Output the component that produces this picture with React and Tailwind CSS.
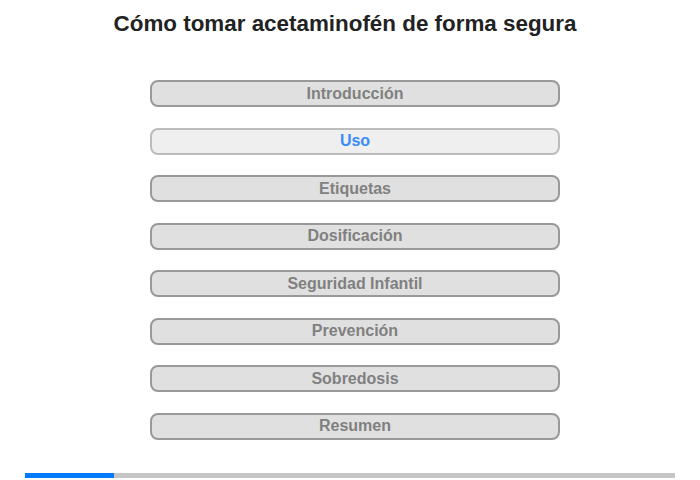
import React from "react";

const sections = [
  "Introducción",
  "Uso",
  "Etiquetas",
  "Dosificación",
  "Seguridad Infantil",
  "Prevención",
  "Sobredosis",
  "Resumen",
];

export default function App() {
  const active = 1;
  return (
    <div className="w-[700px] h-[480px] bg-white flex flex-col font-['Liberation_Sans',Arial,sans-serif]">
      <h1 className="pt-[9px] pr-[10px] text-center text-[22.4px] leading-[30px] font-bold text-[#222]">
        Cómo tomar acetaminofén de forma segura
      </h1>
      <div className="mt-[41px] ml-[150px] w-[410px] flex flex-col gap-[20.5px]">
        {sections.map((s, i) => (
          <button
            key={s}
            className={
              i === active
                ? "h-[27px] rounded-[8px] border-2 border-[#bcbcbc] bg-[#efefef] text-[#3b8cf5] text-[16px] font-bold leading-none"
                : "h-[27px] rounded-[8px] border-2 border-[#999] bg-[#e0e0e0] text-[#808080] text-[16px] font-bold leading-none"
            }
          >
            {s}
          </button>
        ))}
      </div>
      <div className="mt-auto mb-[2px] mx-[25px] h-[5px] bg-[#c6c6c6] flex">
        <div className="w-[89px] bg-[#007bff]" />
      </div>
    </div>
  );
}
